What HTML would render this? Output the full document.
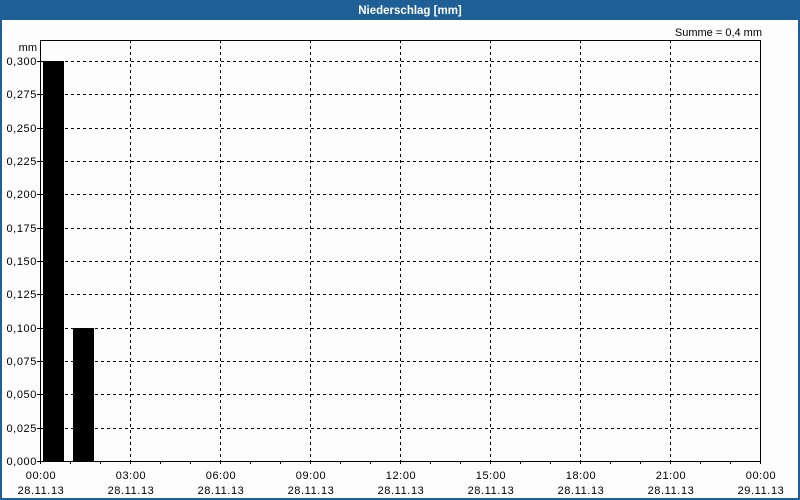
<!DOCTYPE html>
<html><head><meta charset="utf-8"><style>
html,body{margin:0;padding:0;width:800px;height:500px;overflow:hidden;background:#1e5f96}
svg{display:block}
text{font-family:"Liberation Sans",sans-serif;font-size:11px;fill:#000}
.d{letter-spacing:0.6px}
</style></head><body>
<svg width="800" height="500" xmlns="http://www.w3.org/2000/svg">
<rect x="0" y="0" width="800" height="500" fill="#1e5f96"/>
<rect x="2" y="20" width="796" height="478" fill="#fdfdfd"/>
<text x="410" y="14" text-anchor="middle" style="fill:#fff;font-weight:bold;font-size:11.5px">Niederschlag [mm]</text>
<text x="762" y="36" text-anchor="end">Summe = 0,4 mm</text>
<text x="37" y="51" text-anchor="end">mm</text>
<g stroke="#000" stroke-width="1" stroke-dasharray="3,3" shape-rendering="crispEdges">
<line x1="41" y1="61.5" x2="760" y2="61.5"/>
<line x1="41" y1="94.5" x2="760" y2="94.5"/>
<line x1="41" y1="128.5" x2="760" y2="128.5"/>
<line x1="41" y1="161.5" x2="760" y2="161.5"/>
<line x1="41" y1="194.5" x2="760" y2="194.5"/>
<line x1="41" y1="228.5" x2="760" y2="228.5"/>
<line x1="41" y1="261.5" x2="760" y2="261.5"/>
<line x1="41" y1="294.5" x2="760" y2="294.5"/>
<line x1="41" y1="328.5" x2="760" y2="328.5"/>
<line x1="41" y1="361.5" x2="760" y2="361.5"/>
<line x1="41" y1="394.5" x2="760" y2="394.5"/>
<line x1="41" y1="428.5" x2="760" y2="428.5"/>
<line x1="130.5" y1="40" x2="130.5" y2="461"/>
<line x1="220.5" y1="40" x2="220.5" y2="461"/>
<line x1="310.5" y1="40" x2="310.5" y2="461"/>
<line x1="400.5" y1="40" x2="400.5" y2="461"/>
<line x1="490.5" y1="40" x2="490.5" y2="461"/>
<line x1="580.5" y1="40" x2="580.5" y2="461"/>
<line x1="670.5" y1="40" x2="670.5" y2="461"/>
</g>
<rect x="43" y="61" width="21" height="400" fill="#000"/>
<rect x="73" y="328" width="21" height="133" fill="#000"/>
<g stroke="#000" stroke-width="1" shape-rendering="crispEdges" fill="none">
<rect x="40.5" y="40.5" width="720" height="421"/>
<path d="M40.5 461v3M70.5 461v3M100.5 461v3M130.5 461v3M160.5 461v3M190.5 461v3M220.5 461v3M250.5 461v3M280.5 461v3M310.5 461v3M340.5 461v3M370.5 461v3M400.5 461v3M430.5 461v3M460.5 461v3M490.5 461v3M520.5 461v3M550.5 461v3M580.5 461v3M610.5 461v3M640.5 461v3M670.5 461v3M700.5 461v3M730.5 461v3M760.5 461v3"/>
<path d="M37 61.5h4M37 94.5h4M37 128.5h4M37 161.5h4M37 194.5h4M37 228.5h4M37 261.5h4M37 294.5h4M37 328.5h4M37 361.5h4M37 394.5h4M37 428.5h4M37 461.5h4"/>
</g>
<g text-anchor="end" class="d">
<text x="37" y="65">0,300</text><text x="37" y="98">0,275</text><text x="37" y="132">0,250</text>
<text x="37" y="165">0,225</text><text x="37" y="198">0,200</text><text x="37" y="232">0,175</text>
<text x="37" y="265">0,150</text><text x="37" y="298">0,125</text><text x="37" y="332">0,100</text>
<text x="37" y="365">0,075</text><text x="37" y="398">0,050</text><text x="37" y="432">0,025</text>
<text x="37" y="465">0,000</text>
</g>
<g text-anchor="middle" class="d">
<text x="41" y="479">00:00</text><text x="41" y="494">28.11.13</text>
<text x="131" y="479">03:00</text><text x="131" y="494">28.11.13</text>
<text x="221" y="479">06:00</text><text x="221" y="494">28.11.13</text>
<text x="311" y="479">09:00</text><text x="311" y="494">28.11.13</text>
<text x="401" y="479">12:00</text><text x="401" y="494">28.11.13</text>
<text x="491" y="479">15:00</text><text x="491" y="494">28.11.13</text>
<text x="581" y="479">18:00</text><text x="581" y="494">28.11.13</text>
<text x="671" y="479">21:00</text><text x="671" y="494">28.11.13</text>
<text x="761" y="479">00:00</text><text x="761" y="494">29.11.13</text>
</g>
</svg>
</body></html>
